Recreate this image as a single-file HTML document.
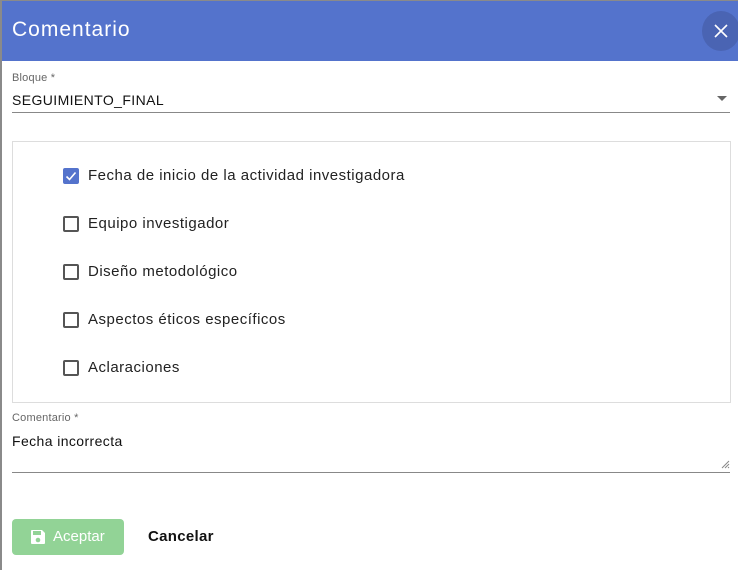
<!DOCTYPE html>
<html><head><meta charset="utf-8"><style>
*{margin:0;padding:0;box-sizing:border-box}
body{width:738px;height:570px;overflow:hidden;background:#fff;font-family:"Liberation Sans",sans-serif;position:relative;color:#111}
.edge{position:absolute;left:0;top:0;width:2px;height:570px;background:#8a8a8a}
.topedge{position:absolute;left:0;top:0;width:738px;height:1px;background:#8a8a8a}
.hdr{position:absolute;left:2px;top:1px;width:736px;height:60px;background:#5473cc}
.hdr h1{position:absolute;left:10px;top:17px;font-size:21px;font-weight:normal;color:#fff;letter-spacing:1px}
.close{position:absolute;left:702px;top:11px;width:38px;height:40px;border-radius:50%;background:#4a64b3}
.lbl{position:absolute;left:12px;font-size:11px;color:#666;letter-spacing:0.2px}
.val{position:absolute;left:12px;font-size:14px;color:#111;letter-spacing:0.4px}
.line{position:absolute;left:12px;width:718px;height:1px;background:#888}
.box{position:absolute;left:12px;top:141px;width:719px;height:262px;border:1px solid #ddd}
.cb{position:absolute;left:63px;width:16px;height:16px;border:2px solid #555;border-radius:2px}
.cb.on{background:#5473cc;border-color:#5473cc}
.it{position:absolute;left:88px;font-size:15px;color:#222;letter-spacing:0.5px}
.btn{position:absolute;left:12px;top:519px;width:112px;height:36px;border-radius:4px;background:#92d396;color:#fff;font-size:15px}
</style></head><body>
<div class="topedge"></div><div class="edge"></div>
<div class="hdr"><h1>Comentario</h1></div>
<div class="close"><svg width="38" height="40" viewBox="0 0 38 40"><path d="M13 14l12 12M25 14l-12 12" stroke="#fff" stroke-width="1.6"/></svg></div>
<div class="lbl" style="top:72px">Bloque *</div>
<div class="val" style="top:92px">SEGUIMIENTO_FINAL</div>
<svg style="position:absolute;left:717px;top:96px" width="10" height="6"><path d="M0 0h10L5 5z" fill="#666"/></svg>
<div class="line" style="top:112px"></div>
<div class="box"></div>
<div class="cb on" style="top:168px"><svg width="12" height="12" viewBox="0 0 12 12" style="position:absolute;left:0;top:0"><path d="M1.5 6.5l3 3 6-7" stroke="#fff" stroke-width="1.6" fill="none"/></svg></div>
<div class="it" style="top:167px">Fecha de inicio de la actividad investigadora</div>
<div class="cb" style="top:216px"></div><div class="it" style="top:215px">Equipo investigador</div>
<div class="cb" style="top:264px"></div><div class="it" style="top:263px">Diseño metodológico</div>
<div class="cb" style="top:312px"></div><div class="it" style="top:311px">Aspectos éticos específicos</div>
<div class="cb" style="top:360px"></div><div class="it" style="top:359px">Aclaraciones</div>
<div class="lbl" style="top:412px">Comentario *</div>
<div class="val" style="top:433px">Fecha incorrecta</div>
<svg style="position:absolute;left:721px;top:460px" width="9" height="9"><path d="M8 1L1 8M8 4L4 8M8 7L7 8" stroke="#888"/></svg>
<div class="line" style="top:472px"></div>
<div class="btn"><svg style="position:absolute;left:18px;top:10px" width="16" height="16" viewBox="0 0 16 16"><path d="M1 2a1 1 0 0 1 1-1h10l3 3v10a1 1 0 0 1-1 1H2a1 1 0 0 1-1-1z" fill="#fff"/><rect x="3" y="2" width="8" height="4" fill="#92d396"/><circle cx="8" cy="11" r="2.3" fill="#92d396"/></svg><span style="position:absolute;left:41px;top:9px">Aceptar</span></div>
<div style="position:absolute;left:148px;top:528px;font-size:15px;font-weight:bold;color:#111;letter-spacing:0.3px">Cancelar</div>
</body></html>
